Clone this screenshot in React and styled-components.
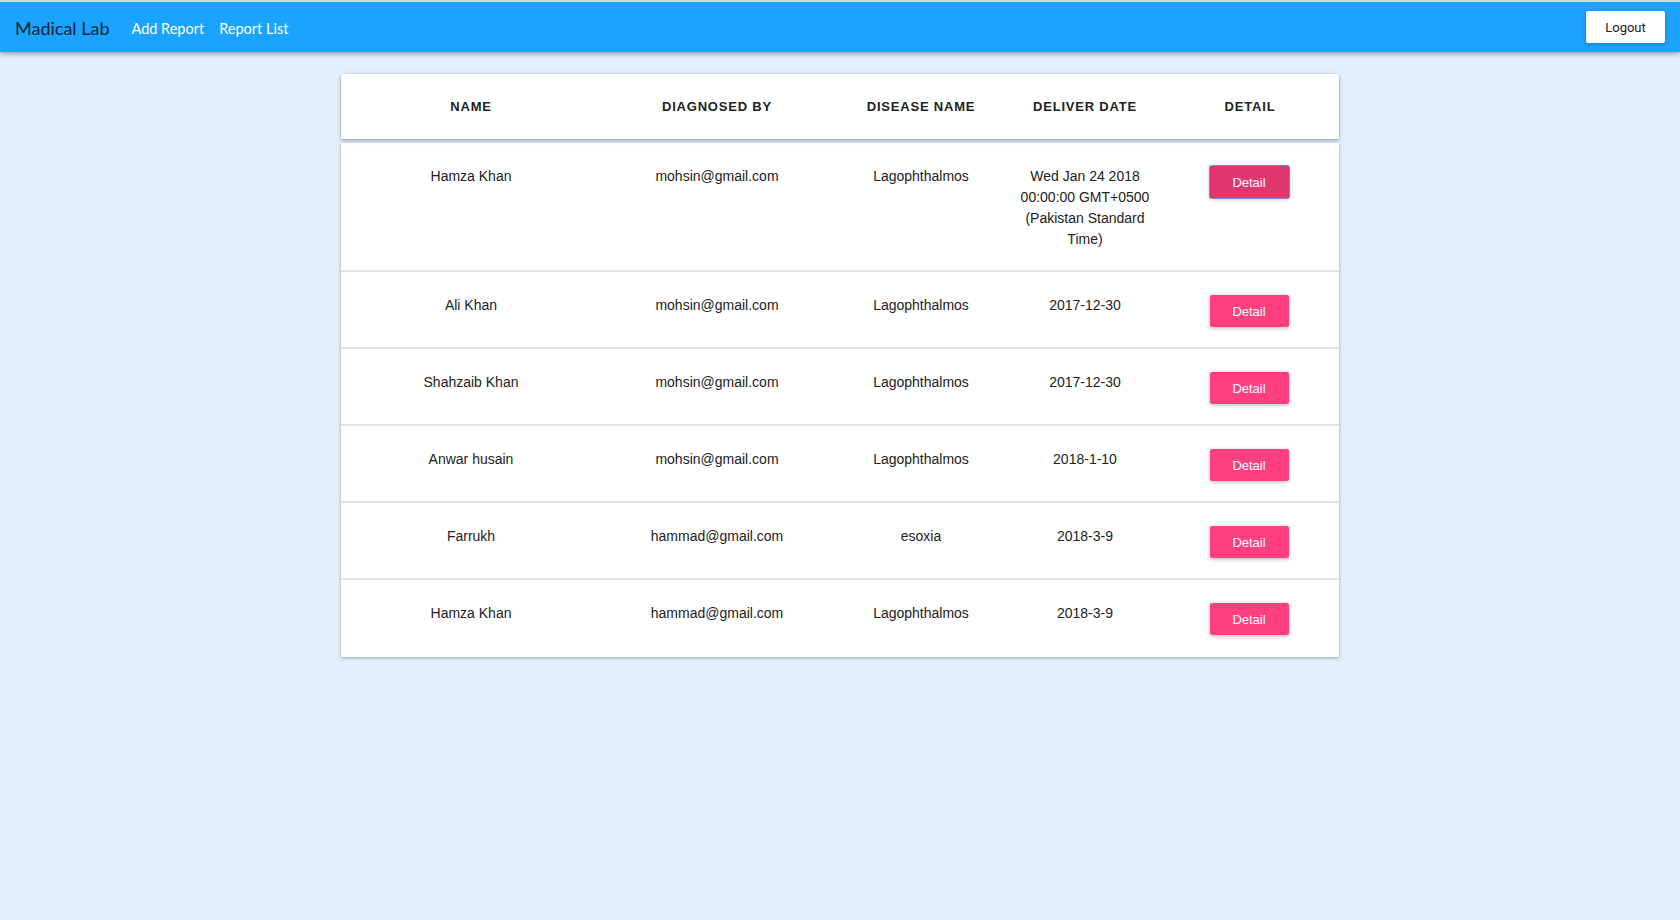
import React from 'react';
import styled, { createGlobalStyle } from 'styled-components';

const GlobalStyle = createGlobalStyle`
  html, body {
    margin: 0;
    padding: 0;
    background: #e3f0fe;
    min-height: 100%;
  }
  body {
    font-family: "Liberation Sans", Arial, sans-serif;
  }
`;

const Page = styled.div`
  min-height: 920px;
  background: #e3f0fe;
`;

const AppBar = styled.header`
  height: 50px;
  border-top: 2px solid #d9d9d9;
  background: #1aa3ff;
  display: flex;
  align-items: center;
  padding: 0 15px;
  box-shadow: 0 2px 5px rgba(0, 0, 0, 0.35);
  position: relative;
  z-index: 1;
`;

const Title = styled.div`
  font-family: Lato, "Open Sans", sans-serif;
  font-size: 18px;
  color: #13273a;
  margin-right: 22px;
  padding-top: 1px;
`;

const NavLink = styled.a`
  font-family: Lato, "Open Sans", sans-serif;
  font-size: 14.5px;
  color: #fff;
  text-decoration: none;
  margin-right: 15px;
  padding-top: 2px;
  cursor: pointer;
`;

const Spacer = styled.div`
  flex: 1;
`;

const LogoutButton = styled.button`
  width: 79px;
  height: 32px;
  border: none;
  border-radius: 2px;
  background: #fff;
  color: #222;
  font-family: Roboto, sans-serif;
  font-size: 13px;
  box-shadow: 0 1px 4px rgba(0, 0, 0, 0.25);
  cursor: pointer;
`;

const Content = styled.main`
  width: 998px;
  margin: 22px auto 0;
`;

const columns = '260px 232px 176px 152px 178px';

const HeadPaper = styled.div`
  background: #fff;
  display: grid;
  grid-template-columns: ${columns};
  height: 65px;
  align-items: center;
  box-shadow: 0 1px 5px rgba(0, 0, 0, 0.22), 0 1px 2px rgba(0, 0, 0, 0.18);
  margin-bottom: 4px;
  position: relative;
`;

const HeadCell = styled.div`
  text-align: center;
  font-size: 13px;
  font-weight: bold;
  letter-spacing: 0.8px;
  color: #222;
`;

const BodyPaper = styled.div`
  background: #fff;
  box-shadow: 0 1px 5px rgba(0, 0, 0, 0.2), 0 1px 2px rgba(0, 0, 0, 0.15);
`;

const Row = styled.div`
  display: grid;
  grid-template-columns: ${columns};
  align-items: start;
  padding: 23px 0 20px;
  border-bottom: 2px solid #e2e2e2;

  &:last-child {
    border-bottom: none;
    padding-bottom: 22px;
  }
`;

const Cell = styled.div`
  text-align: center;
  font-size: 14px;
  line-height: 21px;
  color: #222;
`;

const ButtonCell = styled.div`
  display: flex;
  justify-content: center;
  padding-right: 2px;
`;

const DetailButton = styled.button`
  width: 79px;
  height: 32px;
  border: none;
  border-radius: 2px;
  background: ${(p) => (p.focused ? '#e0376f' : '#ff3f80')};
  color: #fff;
  font-family: "Liberation Sans", Arial, sans-serif;
  font-size: 13px;
  box-shadow: ${(p) =>
    p.focused
      ? '0 0 0 1px #7489e0, 0 1px 4px rgba(0, 0, 0, 0.3)'
      : '0 1px 4px rgba(0, 0, 0, 0.3)'};
  cursor: pointer;
`;

const reports = [
  {
    name: 'Hamza Khan',
    by: 'mohsin@gmail.com',
    disease: 'Lagophthalmos',
    date: 'Wed Jan 24 2018 00:00:00 GMT+0500 (Pakistan Standard Time)',
  },
  { name: 'Ali Khan', by: 'mohsin@gmail.com', disease: 'Lagophthalmos', date: '2017-12-30' },
  { name: 'Shahzaib Khan', by: 'mohsin@gmail.com', disease: 'Lagophthalmos', date: '2017-12-30' },
  { name: 'Anwar husain', by: 'mohsin@gmail.com', disease: 'Lagophthalmos', date: '2018-1-10' },
  { name: 'Farrukh', by: 'hammad@gmail.com', disease: 'esoxia', date: '2018-3-9' },
  { name: 'Hamza Khan', by: 'hammad@gmail.com', disease: 'Lagophthalmos', date: '2018-3-9' },
];

const App = () => (
  <Page>
    <GlobalStyle />
    <AppBar>
      <Title>Madical Lab</Title>
      <NavLink>Add Report</NavLink>
      <NavLink>Report List</NavLink>
      <Spacer />
      <LogoutButton>Logout</LogoutButton>
    </AppBar>
    <Content>
      <HeadPaper>
        <HeadCell>NAME</HeadCell>
        <HeadCell>DIAGNOSED BY</HeadCell>
        <HeadCell>DISEASE NAME</HeadCell>
        <HeadCell>DELIVER DATE</HeadCell>
        <HeadCell>DETAIL</HeadCell>
      </HeadPaper>
      <BodyPaper>
        {reports.map((r, i) => (
          <Row key={i}>
            <Cell>{r.name}</Cell>
            <Cell>{r.by}</Cell>
            <Cell>{r.disease}</Cell>
            <Cell>{r.date}</Cell>
            <ButtonCell>
              <DetailButton focused={i === 0}>Detail</DetailButton>
            </ButtonCell>
          </Row>
        ))}
      </BodyPaper>
    </Content>
  </Page>
);

export default App;
